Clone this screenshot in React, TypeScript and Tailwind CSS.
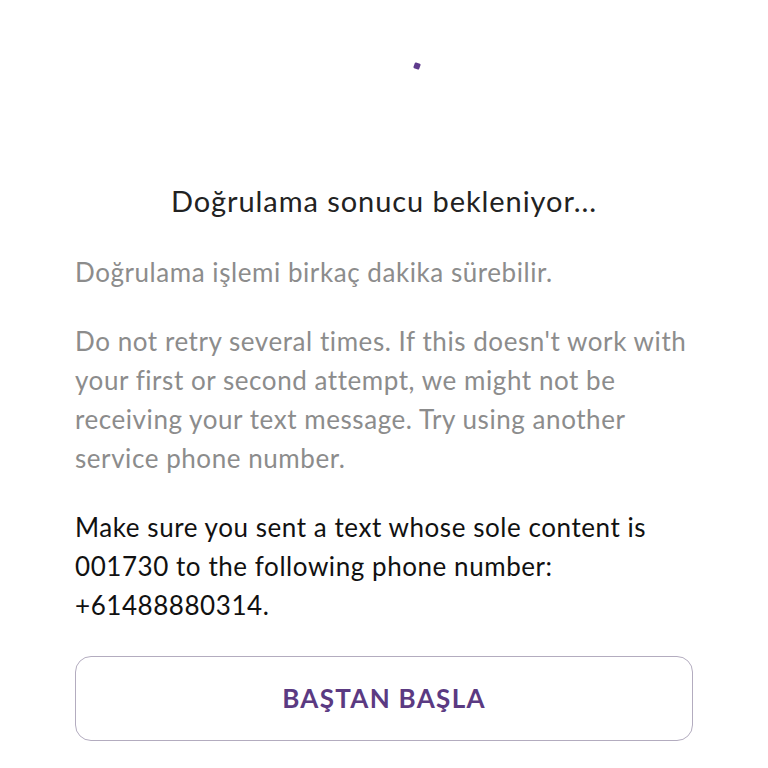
export default function App() {
  return (
    <div
      className="min-h-screen bg-white px-[75px] pt-[63px] tracking-[0.035em]"
      style={{ fontFamily: 'Lato, "Noto Sans", sans-serif' }}
    >
      {/* loading indicator */}
      <div className="flex justify-center">
        <div className="ml-[66px] h-[6px] w-[6px] rotate-[20deg] rounded-[1px] bg-[#5e3b8c]" />
      </div>

      <h1 className="mt-[112px] text-center text-[29px] leading-[40px] tracking-[0.032em] text-[#222222]">
        Doğrulama sonucu bekleniyor...
      </h1>

      <p className="mt-[32px] text-[26px] leading-[39px] text-[#8c8c8c]">
        Doğrulama işlemi birkaç dakika sürebilir.
      </p>

      <p className="mt-[30px] text-[26px] leading-[39px] text-[#8c8c8c]">
        Do not retry several times. If this doesn't work with your first or second attempt, we
        might not be receiving your text message. Try using another service phone number.
      </p>

      <p className="mt-[30px] text-[26px] leading-[39px] text-[#111111]">
        Make sure you sent a text whose sole content is 001730 to the following phone number:
        +61488880314.
      </p>

      <button
        type="button"
        className="mt-[31px] flex h-[85px] w-full items-center justify-center rounded-[16px] border border-[#b3acbf] bg-white text-[26px] font-bold tracking-[0.05em] text-[#5b3a82]"
      >
        BAŞTAN BAŞLA
      </button>
    </div>
  );
}
